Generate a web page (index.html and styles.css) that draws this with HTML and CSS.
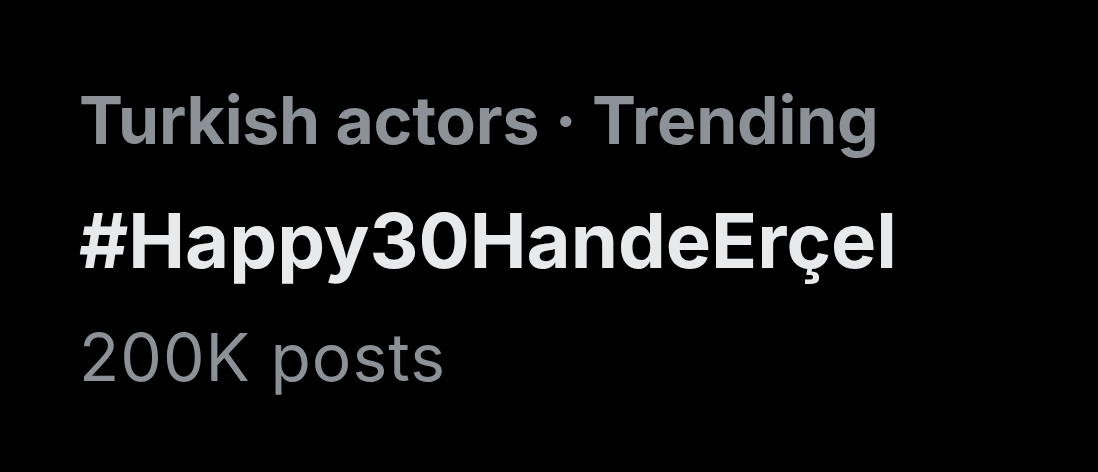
FILE: index.html
```html
<!DOCTYPE html>
<html>
<head>
<meta charset="utf-8">
<link rel="stylesheet" href="styles.css">
</head>
<body>
<div class="trend">
  <div class="context">Turkish actors · Trending</div>
  <div class="tag">#Happy30HandeErçel</div>
  <div class="count">200K posts</div>
</div>
</body>
</html>
```
FILE: styles.css
```css
html, body {
  margin: 0;
  padding: 0;
  background: #000;
  width: 1098px;
  height: 472px;
  overflow: hidden;
}
.trend {
  display: flex;
  flex-direction: column;
  padding: 80px 0 0 79px;
  font-family: Inter, "Liberation Sans", Arial, sans-serif;
}
.context {
  color: #8c9097;
  font-weight: bold;
  font-size: 66px;
  line-height: 80px;
  letter-spacing: -0.2px;
}
.tag {
  margin-top: 20px;
  color: #e7e9ea;
  font-weight: bold;
  font-size: 76px;
  line-height: 120px;
}
.count {
  margin-top: 17px;
  color: #8c9097;
  font-size: 66px;
  line-height: 80px;
  letter-spacing: 1px;
}
```
